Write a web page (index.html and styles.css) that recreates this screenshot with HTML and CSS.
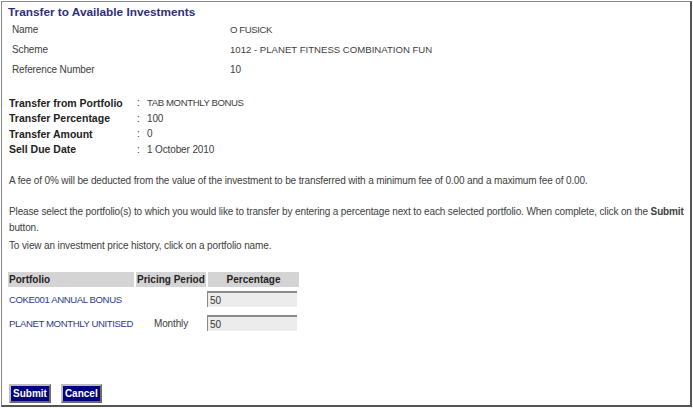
FILE: index.html
```html
<!DOCTYPE html>
<html>
<head>
<meta charset="utf-8">
<link rel="stylesheet" href="styles.css">
</head>
<body>
<div class="frame">
  <h1 class="title">Transfer to Available Investments</h1>
  <div class="info">
    <div class="info-row"><span class="info-label">Name</span><span class="caps">O FUSICK</span></div>
    <div class="info-row"><span class="info-label">Scheme</span><span class="caps scheme">1012 - PLANET FITNESS COMBINATION FUN</span></div>
    <div class="info-row"><span class="info-label">Reference Number</span><span>10</span></div>
  </div>
  <div class="transfer">
    <div class="t-row"><span class="t-label">Transfer from Portfolio</span><span class="t-colon">:</span><span class="caps">TAB MONTHLY BONUS</span></div>
    <div class="t-row"><span class="t-label">Transfer Percentage</span><span class="t-colon">:</span><span>100</span></div>
    <div class="t-row"><span class="t-label">Transfer Amount</span><span class="t-colon">:</span><span>0</span></div>
    <div class="t-row"><span class="t-label">Sell Due Date</span><span class="t-colon">:</span><span>1 October 2010</span></div>
  </div>
  <p class="para fee">A fee of 0% will be deducted from the value of the investment to be transferred with a minimum fee of 0.00 and a maximum fee of 0.00.</p>
  <p class="para select">Please select the portfolio(s) to which you would like to transfer by entering a percentage next to each selected portfolio. When complete, click on the <b>Submit</b> button.</p>
  <p class="para view">To view an investment price history, click on a portfolio name.</p>
  <table class="grid">
    <thead>
      <tr><th class="c-port">Portfolio</th><th class="c-period">Pricing Period</th><th class="c-pct">Percentage</th></tr>
    </thead>
    <tbody>
      <tr><td><a class="caps" href="#">COKE001 ANNUAL BONUS</a></td><td class="period"></td><td class="pct-cell"><input class="pct" type="text" value="50"></td></tr>
      <tr><td><a class="caps" href="#">PLANET MONTHLY UNITISED</a></td><td class="period">Monthly</td><td class="pct-cell"><input class="pct" type="text" value="50"></td></tr>
    </tbody>
  </table>
  <div class="actions">
    <button class="btn">Submit</button>
    <button class="btn">Cancel</button>
  </div>
</div>
</body>
</html>
```
FILE: styles.css
```css
html, body { margin: 0; padding: 0; background: #fff; }
body {
  font-family: "Liberation Sans", Arial, sans-serif;
  font-size: 10px;
  letter-spacing: -0.13px;
  color: #404040;
}
.frame {
  position: relative;
  margin: 1px 0 0 1px;
  width: 691px;
  height: 406px;
  border: 1px solid #8a8a8a;
  border-right: 2px solid #555;
  border-bottom: 2px solid #555;
  box-sizing: border-box;
  padding: 3px 0 0 6px;
}
.caps { font-size: 9.6px; letter-spacing: -0.4px; }
.caps.scheme { letter-spacing: 0; }
.title {
  margin: 0;
  font-size: 11.8px;
  letter-spacing: 0;
  font-weight: bold;
  color: #2e2e7e;
  line-height: 14px;
}
.info { padding: 0 0 0 4px; }
.info-row { display: flex; height: 20px; align-items: center; }
.info-label { width: 218px; }
.transfer { margin-top: 16px; padding-left: 1px; }
.t-row { display: flex; height: 15.5px; align-items: center; }
.t-label { width: 128px; font-weight: bold; font-size: 10.5px; letter-spacing: 0; color: #222; }
.t-colon { width: 10px; }
.para { margin: 0; padding-left: 1px; line-height: 16px; }
.fee { margin-top: 16px; }
.select { margin-top: 15px; padding-right: 2px; }
.view { margin-top: 2px; }
.grid {
  margin-top: 18px;
  border-collapse: collapse;
  table-layout: fixed;
  width: 291px;
}
.grid th {
  background: #d4d4d4;
  color: #222;
  font-weight: bold;
  font-size: 10px;
  letter-spacing: 0;
  height: 15px;
  padding: 0 1px;
  text-align: left;
  white-space: nowrap;
  overflow: hidden;
  border-right: 2px solid #fff;
}
.grid th.c-pct { text-align: center; border-right: 0; }
.c-port { width: 124px; }
.c-period { width: 68px; }
.c-pct { width: 89px; }
.grid td { height: 24px; padding: 0 1px; white-space: nowrap; }
.grid td.pct-cell { padding: 0; }
.grid a { color: #2b3a8c; text-decoration: none; }
.period { text-align: center; }
.pct {
  display: block;
  width: 90px;
  height: 16px;
  box-sizing: border-box;
  border: 0;
  border-top: 2px solid #8a8a8a;
  border-left: 1px solid #8a8a8a;
  background: #ececec;
  font: 10px "Liberation Sans", Arial, sans-serif;
  color: #333;
  padding: 0 2px;
  margin: 0;
}
.actions {
  position: absolute;
  left: 7px;
  bottom: 2px;
  display: flex;
  gap: 10px;
}
.btn {
  background: #000080;
  color: #fff;
  font: bold 10px "Liberation Sans", Arial, sans-serif;
  height: 19px;
  padding: 0 2px;
  border: 2px outset #bdbdbd;
}
```
